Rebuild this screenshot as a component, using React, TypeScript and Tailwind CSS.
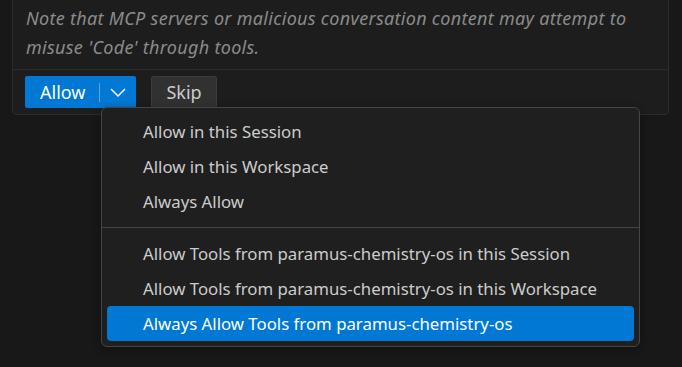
import React from 'react';

const sessionItems = ['Allow in this Session', 'Allow in this Workspace', 'Always Allow'];
const serverItems = [
    'Allow Tools from paramus-chemistry-os in this Session',
    'Allow Tools from paramus-chemistry-os in this Workspace',
    'Always Allow Tools from paramus-chemistry-os',
];

const MenuItem: React.FC<{ label: string; active?: boolean }> = ({ label, active }) => (
    <div
        className={`h-[35px] flex items-center pl-[36px] pr-4 rounded-[4px] whitespace-nowrap ${active ? 'bg-[#0078d4] text-white' : 'text-[#cccccc]'}`}
    >
        {label}
    </div>
);

export default function App() {
    return (
        <div
            className="relative w-[682px] h-[367px] overflow-hidden bg-[#181818]"
            style={{ fontFamily: '"Noto Sans", "Open Sans", sans-serif' }}
        >
            <div className="ml-[12px] mr-[13px] -mt-[10px] border border-[#2b2b2b] rounded-[4px] bg-[#1d1d1d]">
                <p className="pl-[13px] pr-[12px] pt-[13px] pb-[7px] text-[18px] leading-[29px] italic tracking-[0.3px] text-[#8b8b8b] whitespace-nowrap">
                    Note that MCP servers or malicious conversation content may attempt to
                    <br />
                    misuse 'Code' through tools.
                </p>
                <div className="border-t border-[#2b2b2b] px-[12px] py-[6px] flex items-center gap-[15px]">
                    <div className="h-[32px] flex items-center bg-[#0078d4] rounded-[2px] text-white text-[18px]">
                        <span className="pl-[15px] pr-[14px]">Allow</span>
                        <span className="w-px h-[19px] bg-[#5ba5e0]" />
                        <span className="pl-[10px] pr-[10px] flex items-center">
                            <svg width="16" height="16" viewBox="0 0 16 16" fill="none">
                                <path d="M1 5l7 7 7-7" stroke="currentColor" strokeWidth="1.5" />
                            </svg>
                        </span>
                    </div>
                    <div className="h-[32px] flex items-center px-[14px] bg-[#313131] border border-[#3c3c3c] rounded-[2px] text-[#cccccc] text-[18px]">
                        Skip
                    </div>
                </div>
            </div>

            <div className="absolute left-[101px] top-[107px] w-[539px] border border-[#454545] rounded-[6px] bg-[#1f1f1f] px-[5px] pt-[6px] pb-[5px] text-[16.8px] shadow-[0_2px_8px_rgba(0,0,0,0.36)]">
                {sessionItems.map(item => (
                    <MenuItem key={item} label={item} />
                ))}
                <div className="-mx-[5px] my-[8px] h-px bg-[#454545]" />
                {serverItems.map((item, i) => (
                    <MenuItem key={item} label={item} active={i === serverItems.length - 1} />
                ))}
            </div>
        </div>
    );
}
